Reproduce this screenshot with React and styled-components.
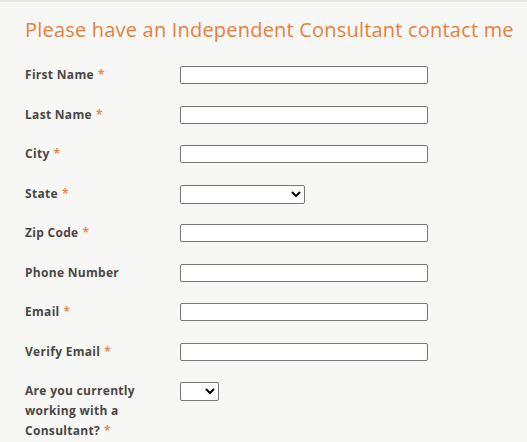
import React from "react";
import styled, { createGlobalStyle } from "styled-components";

const Global = createGlobalStyle`
  html, body { margin: 0; padding: 0; background: #f7f7f5; }
  body { font-family: "Open Sans", "Liberation Sans", sans-serif; }
`;

const Panel = styled.div`
  background: #f7f7f5;
  border-top: 2px solid #e6e6e4;
  padding: 15px 0 20px 25px;
  min-height: 440px;
  box-sizing: border-box;
`;

const Heading = styled.h2`
  margin: 0 0 23px;
  font-family: "Open Sans", "Liberation Sans", sans-serif;
  font-weight: 400;
  font-size: 20px;
  line-height: 26px;
  letter-spacing: 0.2px;
  color: #e5813e;
`;

const Form = styled.form`
  display: flex;
  flex-direction: column;
  gap: 20.5px;
`;

const Row = styled.div`
  display: flex;
  align-items: flex-start;
`;

const Label = styled.label`
  width: 155px;
  flex: none;
  margin-top: -1px;
  padding-right: 15px;
  box-sizing: border-box;
  font-family: "Open Sans", "Liberation Sans", sans-serif;
  font-weight: 700;
  font-size: 12px;
  line-height: 20px;
  letter-spacing: 0.3px;
  color: #4b4744;
`;

const Star = styled.span`
  color: #e8894a;
  margin-left: 4px;
`;

const TextInput = styled.input`
  width: 248px;
  height: 18px;
  box-sizing: border-box;
  margin: 0;
  padding: 0 3px;
  border: 1px solid #767676;
  border-radius: 2px;
  background: #fff;
  font-size: 12px;
`;

const Select = styled.select`
  width: ${(p) => p.$w}px;
  height: 19px;
  box-sizing: border-box;
  margin: 0;
  padding: 0 2px;
  border: 1px solid #767676;
  border-radius: 2px;
  background: #fff;
  font-size: 12px;
`;

const fields = [
  { label: "First Name", req: true },
  { label: "Last Name", req: true },
  { label: "City", req: true },
  { label: "State", req: true, select: 125 },
  { label: "Zip Code", req: true },
  { label: "Phone Number", req: false },
  { label: "Email", req: true },
  { label: "Verify Email", req: true },
  { label: "Are you currently working with a Consultant?", req: true, select: 39 },
];

export default function App() {
  return (
    <>
      <Global />
      <Panel>
        <Heading>Please have an Independent Consultant contact me</Heading>
        <Form>
          {fields.map((f) => (
            <Row key={f.label}>
              <Label>
                {f.label}
                {f.req && <Star>*</Star>}
              </Label>
              {f.select ? (
                <Select $w={f.select}>
                  <option value=""></option>
                </Select>
              ) : (
                <TextInput type="text" />
              )}
            </Row>
          ))}
        </Form>
      </Panel>
    </>
  );
}
